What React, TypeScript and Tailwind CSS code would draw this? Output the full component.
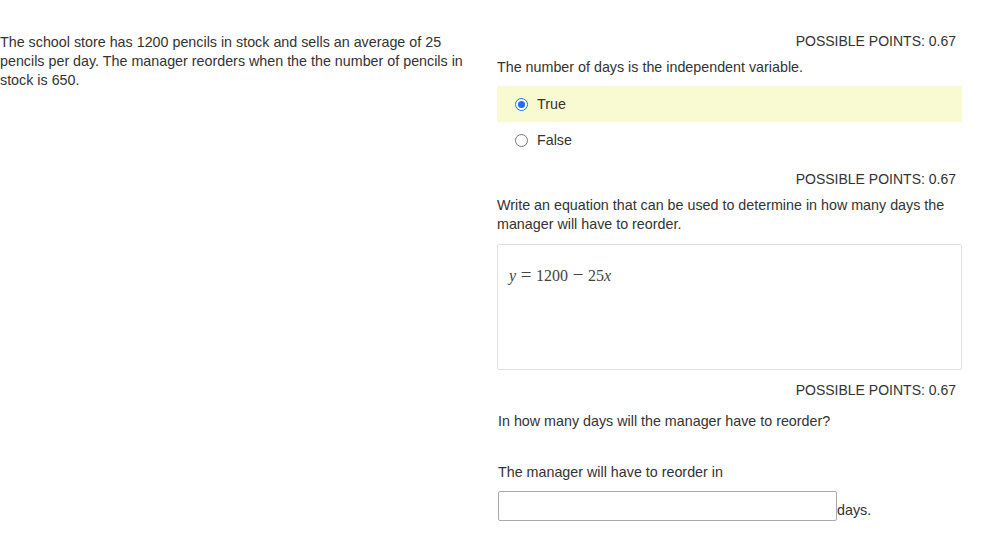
import React from "react";

function Points() {
  return (
    <p className="text-right pr-[6px] leading-[19px] text-[14px]">POSSIBLE POINTS: 0.67</p>
  );
}

function Radio({ checked }: { checked: boolean }) {
  return checked ? (
    <span className="inline-flex items-center justify-center w-[13px] h-[13px] rounded-full border border-[#1a73e8] bg-white">
      <span className="w-[7px] h-[7px] rounded-full bg-[#1a73e8]" />
    </span>
  ) : (
    <span className="inline-block w-[13px] h-[13px] rounded-full border border-[#767676] bg-white" />
  );
}

export default function App() {
  return (
    <div
      className="flex w-[998px] h-[547px] bg-white text-[14.3px] text-[#333] pt-[32px]"
      style={{ fontFamily: '"Liberation Sans", Arial, sans-serif' }}
    >
      <div className="w-[470px] pt-[1px] leading-[19px]">
        The school store has 1200 pencils in stock and sells an average of 25
        pencils per day. The manager reorders when the the number of pencils in
        stock is 650.
      </div>

      <div className="ml-[27px] w-[465px] flex flex-col">
        <Points />
        <p className="mt-[7px] leading-[19px]">The number of days is the independent variable.</p>

        <div className="mt-[9px] flex flex-col">
          <div className="h-[36px] bg-[#fafad2] flex items-center pl-[18px] gap-[9px] pt-[1px]">
            <Radio checked />
            <span>True</span>
          </div>
          <div className="h-[36px] flex items-center pl-[18px] gap-[9px] pt-[1px]">
            <Radio checked={false} />
            <span>False</span>
          </div>
        </div>

        <div className="mt-[12px]">
          <Points />
        </div>
        <p className="mt-[7px] leading-[19px]">
          Write an equation that can be used to determine in how many days the
          manager will have to reorder.
        </p>
        <div className="mt-[10px] h-[126px] border border-[#e0e0e0] rounded-[2px] pl-[11px] pt-[19px]">
          <span
            className="text-[16px] text-[#444] whitespace-nowrap"
            style={{ fontFamily: '"Liberation Serif", "Times New Roman", serif' }}
          >
            <i>y</i>
            <span className="inline-block w-[12px] mx-[4px] text-center text-[19px] leading-none">=</span>1200
            <span className="inline-block w-[12px] mx-[4px] text-center text-[19px] leading-none">−</span>25<i>x</i>
          </span>
        </div>

        <div className="mt-[11px]">
          <Points />
        </div>
        <p className="mt-[12px] pl-[1px] leading-[19px]">In how many days will the manager have to reorder?</p>

        <p className="mt-[32px] pl-[1px] leading-[19px]">The manager will have to reorder in</p>
        <div className="mt-[9px] pl-[1px] flex items-end">
          <input
            type="text"
            className="w-[339px] h-[30px] border border-[#aaa] rounded-[2px] bg-white outline-none"
          />
          <span className="leading-[19px] mb-[1px]">days.</span>
        </div>
      </div>
    </div>
  );
}
